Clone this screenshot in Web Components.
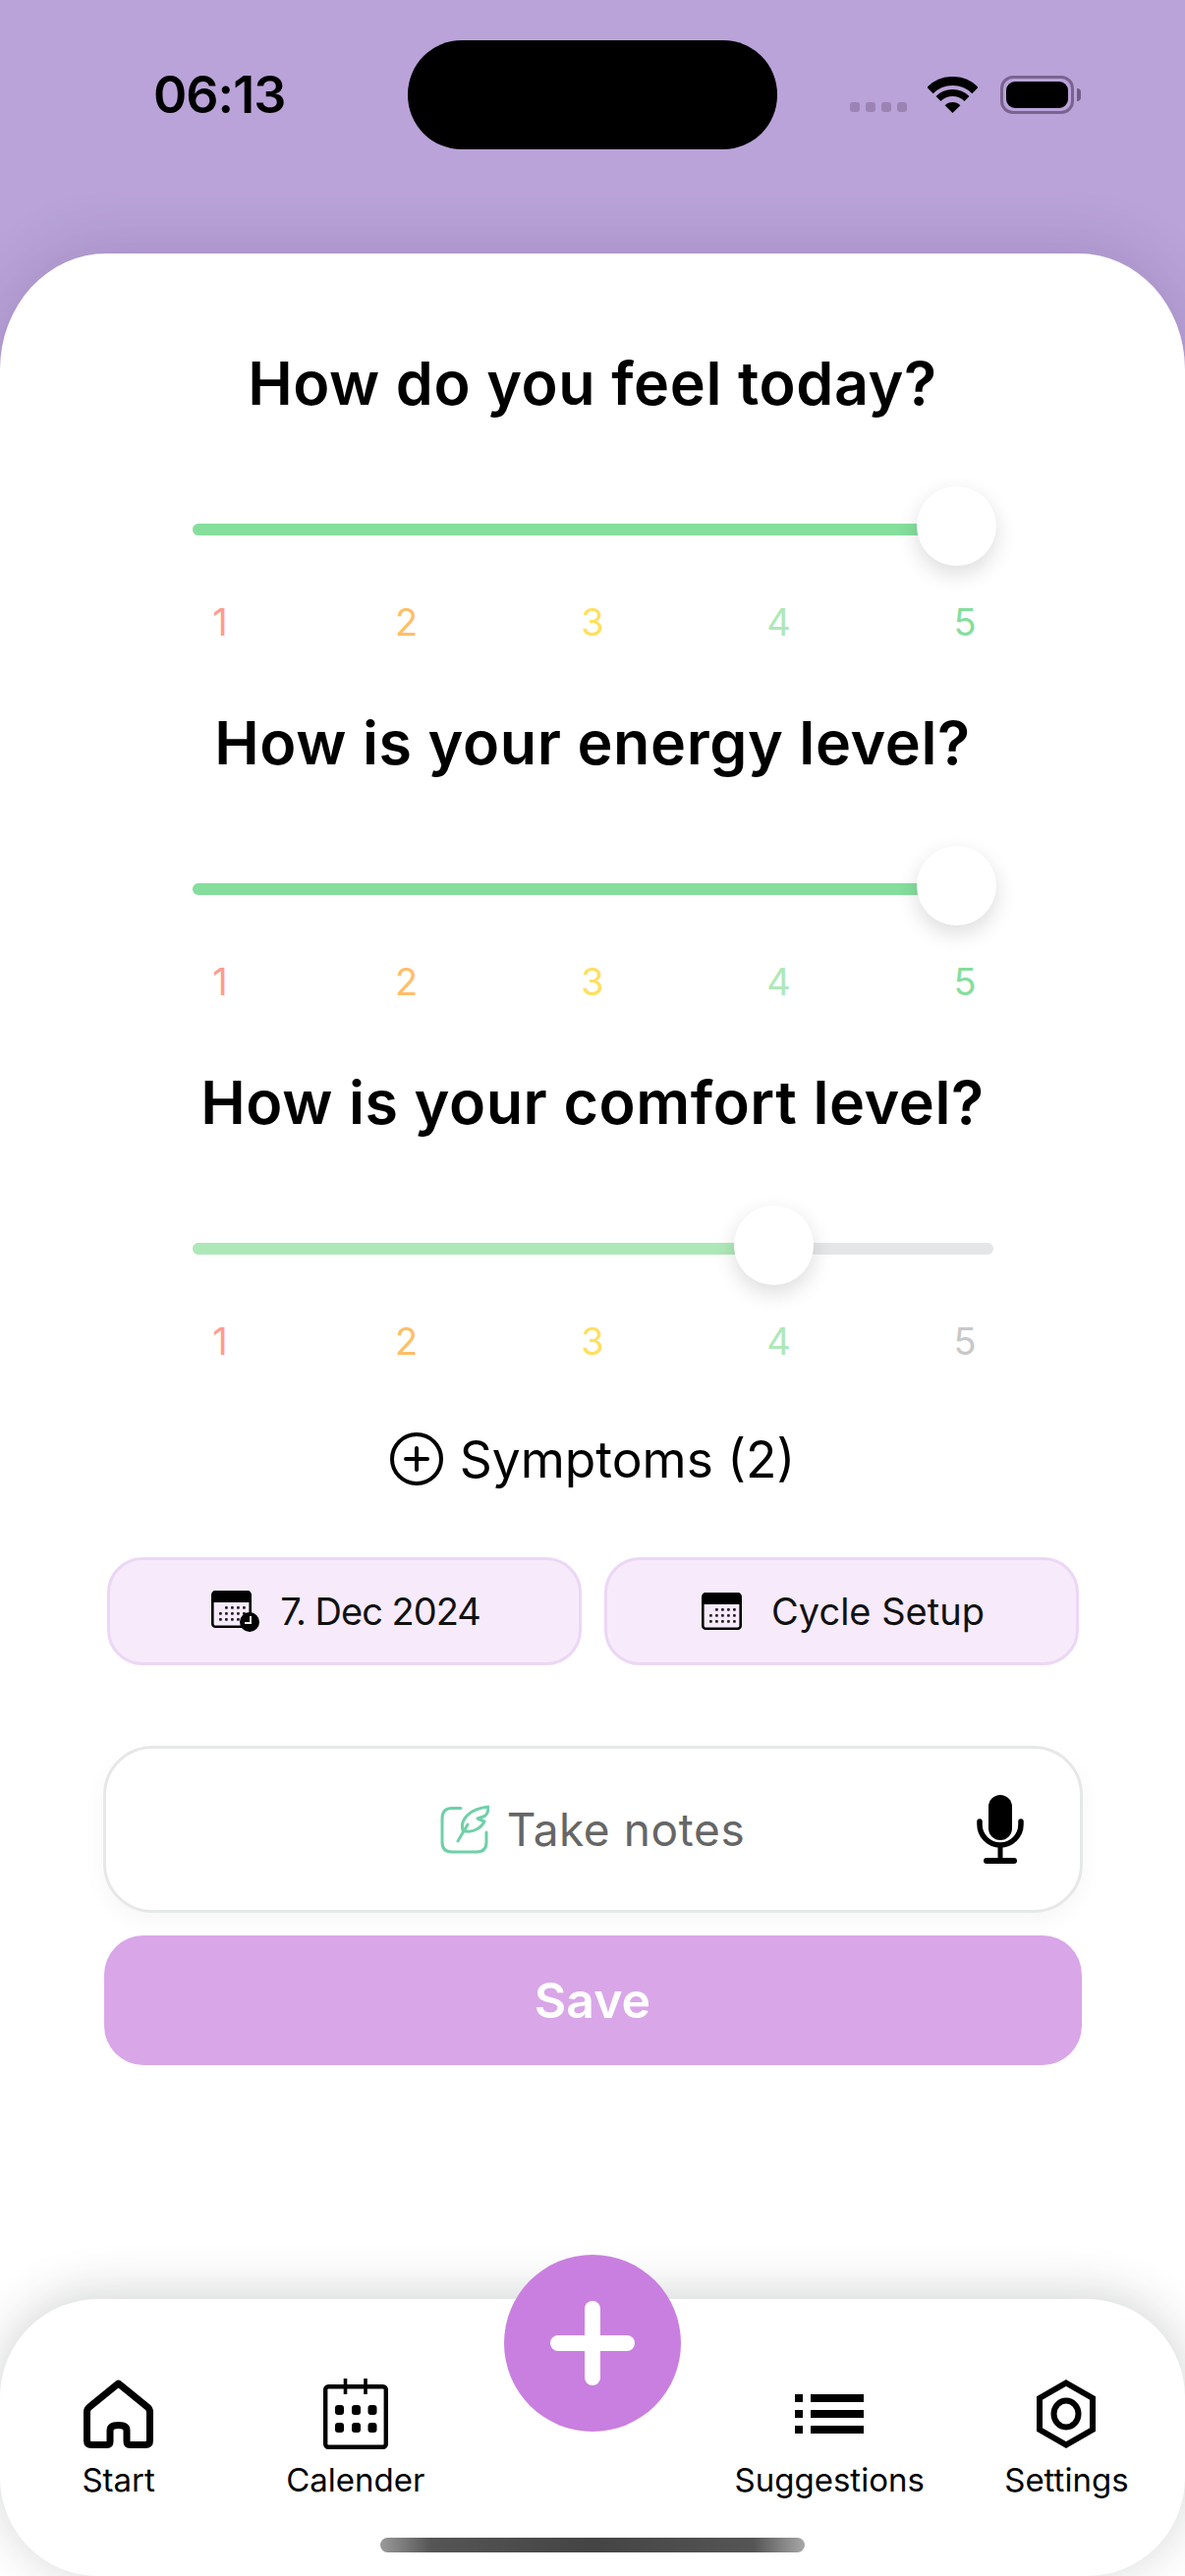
<!DOCTYPE html>
<html lang="en">
<head>
<meta charset="utf-8">
<title>Daily check-in</title>
<style>
    html, body { margin: 0; padding: 0; background: #fff; }
    body { font-family: Inter, "Noto Sans", sans-serif; }
</style>
</head>
<body>
<app-screen>
    <status-bar slot="top" time="06:13"></status-bar>
    <rating-slider label="How do you feel today?" value="5"></rating-slider>
    <rating-slider label="How is your energy level?" value="5"></rating-slider>
    <rating-slider label="How is your comfort level?" value="4"></rating-slider>
    <symptoms-row count="2"></symptoms-row>
    <chip-row>
        <info-chip icon="clock">7. Dec 2024</info-chip>
        <info-chip icon="plain">Cycle Setup</info-chip>
    </chip-row>
    <notes-field placeholder="Take notes"></notes-field>
    <save-button>Save</save-button>
    <bottom-nav slot="bottom">
        <nav-item icon="home">Start</nav-item>
        <nav-item icon="calendar">Calender</nav-item>
        <nav-item icon="list" style="grid-column: 4">Suggestions</nav-item>
        <nav-item icon="settings">Settings</nav-item>
    </bottom-nav>
</app-screen>

<script>
// ─── Inline SVG icons ───────────────────────────────────────────────────
const dots = (xs, ys, w, h, r, fill) => ys.map((y) => xs.map((x) =>
    `<rect x="${x}" y="${y}" width="${w}" height="${h}" rx="${r}" fill="${fill}"/>`).join('')).join('');

const HOME = `<svg viewBox="0 0 71 70" width="71" height="70" fill="none" stroke="#000" stroke-width="7" stroke-linejoin="round"><path d="M35.5 4 L65 28 Q67.5 30 67.5 33 V62 Q67.5 66.5 63 66.5 H47 Q44 66.5 44 63 V52 Q44 46.5 35.5 46.5 Q27 46.5 27 52 V63 Q27 66.5 24 66.5 H8 Q3.5 66.5 3.5 62 V33 Q3.5 30 6 28 Z"/></svg>`;
const CALENDAR = `<svg viewBox="0 0 66 72" width="66" height="72" fill="none" stroke="#000"><rect x="2.2" y="8.2" width="61.6" height="61.6" rx="3" stroke-width="4.4"/><path d="M22.5 0 V16 M43 0 V16" stroke-width="3.6"/>${dots([12, 29, 45.5], [27, 45], 9, 10, 3, '#000').replace(/<rect /g, '<rect stroke="none" ')}</svg>`;
const LIST = `<svg viewBox="0 0 70 40" width="70" height="40" fill="#000"><rect x="0" y="0" width="8" height="8"/><rect x="16" y="0" width="54" height="8"/><rect x="0" y="16" width="8" height="8"/><rect x="16" y="16" width="54" height="8"/><rect x="0" y="32" width="8" height="8"/><rect x="16" y="32" width="54" height="8"/></svg>`;
const SETTINGS = `<svg viewBox="0 0 60 70" width="60" height="70" fill="none" stroke="#000" stroke-width="6"><path d="M30 3.5 L57 19 V51 L30 66.5 L3 51 V19 Z"/><ellipse cx="30" cy="35" rx="12.5" ry="13.5"/></svg>`;
const PLUS_CIRCLE = `<svg viewBox="0 0 54 54" width="54" height="54" fill="none" stroke="#000" stroke-width="4" stroke-linecap="round"><circle cx="27" cy="27" r="25"/><path d="M27 16 V38 M16 27 H38"/></svg>`;
const MIC = `<svg viewBox="0 0 48 70" width="48" height="70"><rect x="12" y="0" width="24" height="46" rx="12" fill="#000"/><path d="M3 27 V30 A21 21 0 0 0 45 30 V27" fill="none" stroke="#000" stroke-width="5.5" stroke-linecap="round"/><rect x="21.5" y="50" width="5" height="16" fill="#000"/><rect x="7" y="64" width="34" height="6" rx="3" fill="#000"/></svg>`;
const FEATHER = `<svg viewBox="0 0 50 50" width="50" height="50" fill="none" stroke="#6fd0a8" stroke-width="3" stroke-linecap="round" stroke-linejoin="round"><path d="M21 3.5 H12 Q2 3.5 2 14 V38 Q2 48 12 48 H37 Q47 48 47 38 V28"/><path d="M18 37 L28 20"/><path d="M23 26 C20 15 30 4 49 2 C49 7 47 11 44 12 L38 14 L45 17 C42 23 33 30 23 26 Z"/></svg>`;
const FAB_PLUS = `<svg viewBox="0 0 86 86" width="86" height="86" fill="#fff"><rect x="0" y="35" width="86" height="16" rx="8"/><rect x="35" y="0" width="16" height="86" rx="8"/></svg>`;
const WIFI = `<svg viewBox="0 0 51 37" width="51" height="37" fill="none" stroke="#000"><path d="M2.5 14 A32.5 32.5 0 0 1 48.5 14" stroke-width="9"/><path d="M11 22.5 A20.5 20.5 0 0 1 40 22.5" stroke-width="7"/><path d="M25.5 37 L17.7 29.2 A11 11 0 0 1 33.3 29.2 Z" fill="#000" stroke="none"/></svg>`;
const SMALL_CAL = `<rect x="1.3" y="1.3" width="38.4" height="35.4" rx="3" fill="none" stroke="#000" stroke-width="2.6"/><path d="M1 12 V4 Q1 0 5 0 H36 Q40 0 40 4 V12 Z" fill="#000"/>${dots([8, 14, 20, 26, 32], [22, 28], 2.8, 2.8, .8, '#222')}${dots([14, 20, 26, 32], [16], 2.8, 2.8, .8, '#222')}`;
const CHIP_ICONS = {
    clock: `<svg viewBox="0 0 50 42" width="50" height="42">${SMALL_CAL}<circle cx="39" cy="32" r="10" fill="#000"/><path d="M40 26 V33 H34" fill="none" stroke="#f7ebfb" stroke-width="2"/></svg>`,
    plain: `<svg viewBox="0 0 41 39" width="41" height="39">${SMALL_CAL}</svg>`,
};
const NAV_ICONS = { home: HOME, calendar: CALENDAR, list: LIST, settings: SETTINGS };

const RATING_COLORS = ['#ff9c90', '#ffbe66', '#ffdf5e', '#aee8b8', '#85de9c'];

// ─── Shell ──────────────────────────────────────────────────────────────
class AppScreen extends HTMLElement {
    constructor() {
        super();
        this.attachShadow({ mode: 'open' });
        this.shadowRoot.innerHTML = `<style>
            :host {
                display: flex; flex-direction: column; width: 1206px; height: 2622px; overflow: hidden; color: #000;
                background: linear-gradient(#b9a3d9 0, #b9a3d9 500px, #fff 500px);
            }
            .card {
                flex: 1; min-height: 0; box-sizing: border-box; padding-top: 87px;
                display: flex; flex-direction: column; align-items: center;
                background: #fff; border-radius: 108px 108px 0 0 / 118px 118px 0 0;
                box-shadow: 0 -8px 60px rgba(60, 40, 80, .16);
                clip-path: inset(-100px 0 0 0);
            }
        </style>
        <slot name="top"></slot>
        <div class="card"><slot></slot></div>
        <slot name="bottom"></slot>`;
    }
}

class StatusBar extends HTMLElement {
    constructor() {
        super();
        this.attachShadow({ mode: 'open' });
    }

    connectedCallback() {
        this.shadowRoot.innerHTML = `<style>
            :host { display: block; height: 258px; }
            .bar { display: grid; grid-template-columns: 415px 376px 1fr; height: 111px; padding-top: 41px; }
            .time { align-self: center; padding-left: 156px; font: 600 52px/60px Inter, sans-serif; letter-spacing: -1px; }
            .island { background: #000; border-radius: 55px; }
            .right { display: flex; align-items: center; padding-left: 74px; height: 111px; }
            .cell { display: flex; gap: 6px; align-self: flex-end; margin-bottom: 38px; margin-right: 21px; }
            .cell i { width: 10px; height: 10px; border-radius: 3px; background: #9b84b4; }
            .wifi { display: flex; margin-right: 23px; margin-top: -1px; }
            .battery { position: relative; box-sizing: border-box; width: 75px; height: 39px; padding: 3px; border: 3px solid #7a648f; border-radius: 13px; margin-top: -1px; }
            .battery b { display: block; height: 100%; background: #000; border-radius: 9px; }
            .battery::after { content: ''; position: absolute; right: -10px; top: 10px; width: 4px; height: 13px; background: #6f5c85; border-radius: 0 4px 4px 0; }
        </style>
        <div class="bar">
            <div class="time">${this.getAttribute('time')}</div>
            <div class="island"></div>
            <div class="right">
                <div class="cell"><i></i><i></i><i></i><i></i></div>
                <div class="wifi">${WIFI}</div>
                <div class="battery"><b></b></div>
            </div>
        </div>`;
    }
}

// ─── Rating slider ──────────────────────────────────────────────────────
class RatingSlider extends HTMLElement {
    constructor() {
        super();
        this.attachShadow({ mode: 'open' });
    }

    connectedCallback() {
        const value = Number(this.getAttribute('value'));
        const pct = (value - 1) / 4;
        const fill = RATING_COLORS[value - 1];
        const labels = RATING_COLORS.map((c, i) =>
            `<span style="color:${i < value ? c : '#c8c8c8'}">${i + 1}</span>`).join('');

        this.shadowRoot.innerHTML = `<style>
            :host { display: flex; flex-direction: column; align-items: center; width: 1206px; margin-bottom: 53px; }
            h2 { margin: 0; font: 600 61px/90px Inter, sans-serif; letter-spacing: .6px; white-space: nowrap; }
            .row { position: relative; width: 815px; height: 81px; margin-top: 60px; display: flex; align-items: center; }
            .track { width: 100%; height: 12px; margin-top: 7px; border-radius: 6px; background: #e4e6e8; overflow: hidden; }
            .fill { height: 100%; background: ${fill}; width: calc((100% - 73px) * ${pct} + 36px); }
            .thumb {
                position: absolute; top: 0; width: 81px; height: 81px; border-radius: 50%; background: #fff;
                left: calc((100% - 73px) * ${pct} - 5px);
                box-shadow: 0 8px 22px rgba(0, 0, 0, .14);
            }
            .labels { display: grid; grid-template-columns: repeat(5, 189.5px); margin-top: 32px; font: 400 38px/50px Inter, sans-serif; text-align: center; }
        </style>
        <h2>${this.getAttribute('label')}</h2>
        <div class="row">
            <div class="track"><div class="fill"></div></div>
            <div class="thumb"></div>
        </div>
        <div class="labels">${labels}</div>`;
    }
}

class SymptomsRow extends HTMLElement {
    constructor() {
        super();
        this.attachShadow({ mode: 'open' });
    }

    connectedCallback() {
        this.shadowRoot.innerHTML = `<style>
            :host { display: flex; align-items: center; justify-content: center; gap: 17px; margin-top: 7px; height: 70px; font: 400 51.5px/70px Inter, sans-serif; }
            svg { display: block; }
        </style>${PLUS_CIRCLE}<span>Symptoms (${this.getAttribute('count')})</span>`;
    }
}

// ─── Chips ──────────────────────────────────────────────────────────────
class ChipRow extends HTMLElement {
    constructor() {
        super();
        this.attachShadow({ mode: 'open' });
        this.shadowRoot.innerHTML = `<style>
            :host { display: grid; grid-template-columns: 483px 483px; gap: 23px; margin-top: 65px; }
        </style><slot></slot>`;
    }
}

class InfoChip extends HTMLElement {
    constructor() {
        super();
        this.attachShadow({ mode: 'open' });
    }

    connectedCallback() {
        const icon = this.getAttribute('icon');
        const isDate = icon === 'clock';
        this.shadowRoot.innerHTML = `<style>
            :host {
                display: flex; align-items: center; justify-content: center; gap: ${isDate ? 20 : 30}px;
                box-sizing: border-box; height: 110px; padding-left: 4px;
                border: 3px solid #ecd6f5; border-radius: 36px;
                background: #f7ebfb; font: 400 38px/50px Inter, sans-serif; color: #111;
                letter-spacing: ${isDate ? -1 : 0}px;
            }
            svg { display: block; }
        </style>${CHIP_ICONS[icon]}<span><slot></slot></span>`;
    }
}

// ─── Notes + save ───────────────────────────────────────────────────────
class NotesField extends HTMLElement {
    constructor() {
        super();
        this.attachShadow({ mode: 'open' });
    }

    connectedCallback() {
        this.shadowRoot.innerHTML = `<style>
            :host {
                display: flex; align-items: center; justify-content: center; gap: 18px; position: relative;
                box-sizing: border-box; width: 997px; height: 170px; margin-top: 82px;
                border: 3px solid #e6e8e8; border-radius: 50px; background: #fff;
                box-shadow: 0 8px 24px rgba(0, 0, 0, .04);
                font: 400 46px/60px Inter, sans-serif; letter-spacing: .6px; color: #666;
            }
            svg { display: block; }
            .mic { position: absolute; right: 57px; top: 47px; }
        </style>${FEATHER}<span>${this.getAttribute('placeholder')}</span><div class="mic">${MIC}</div>`;
    }
}

class SaveButton extends HTMLElement {
    constructor() {
        super();
        this.attachShadow({ mode: 'open' });
        this.shadowRoot.innerHTML = `<style>
            :host {
                display: flex; align-items: center; justify-content: center;
                width: 995px; height: 132px; margin-top: 23px; border-radius: 40px;
                background: #d9a6e8; color: #fff; font: 600 50px/60px Inter, sans-serif;
            }
        </style><slot></slot>`;
    }
}

// ─── Bottom nav ─────────────────────────────────────────────────────────
class BottomNav extends HTMLElement {
    constructor() {
        super();
        this.attachShadow({ mode: 'open' });
        this.shadowRoot.innerHTML = `<style>
            :host {
                display: grid; grid-template-columns: repeat(5, 1fr); position: relative; box-sizing: border-box;
                height: 282px; padding-top: 81px; background: #fff; border-radius: 100px;
                box-shadow: 0 -4px 50px rgba(40, 50, 50, .22);
            }
            .fab {
                position: absolute; left: 513px; top: -45px; width: 180px; height: 180px; border-radius: 50%;
                background: #c97fdf; display: flex; align-items: center; justify-content: center;
            }
            .fab svg { display: block; }
            .home-bar {
                position: absolute; left: 387px; top: 243px; width: 432px; height: 15px; border-radius: 8px;
                background: linear-gradient(to right, #9a9a9a, #555 12%, #444 50%, #555 88%, #a8a8a8);
            }
        </style>
        <slot></slot>
        <div class="fab">${FAB_PLUS}</div>
        <div class="home-bar"></div>`;
    }
}

class NavItem extends HTMLElement {
    constructor() {
        super();
        this.attachShadow({ mode: 'open' });
    }

    connectedCallback() {
        this.shadowRoot.innerHTML = `<style>
            :host { display: flex; flex-direction: column; align-items: center; }
            .icon { display: flex; align-items: center; justify-content: center; height: 72px; }
            svg { display: block; }
            .lbl { margin-top: 11px; font: 400 33px/40px Inter, sans-serif; white-space: nowrap; }
        </style>
        <div class="icon">${NAV_ICONS[this.getAttribute('icon')]}</div>
        <div class="lbl"><slot></slot></div>`;
    }
}

customElements.define('app-screen', AppScreen);
customElements.define('status-bar', StatusBar);
customElements.define('rating-slider', RatingSlider);
customElements.define('symptoms-row', SymptomsRow);
customElements.define('chip-row', ChipRow);
customElements.define('info-chip', InfoChip);
customElements.define('notes-field', NotesField);
customElements.define('save-button', SaveButton);
customElements.define('bottom-nav', BottomNav);
customElements.define('nav-item', NavItem);
</script>
</body>
</html>
